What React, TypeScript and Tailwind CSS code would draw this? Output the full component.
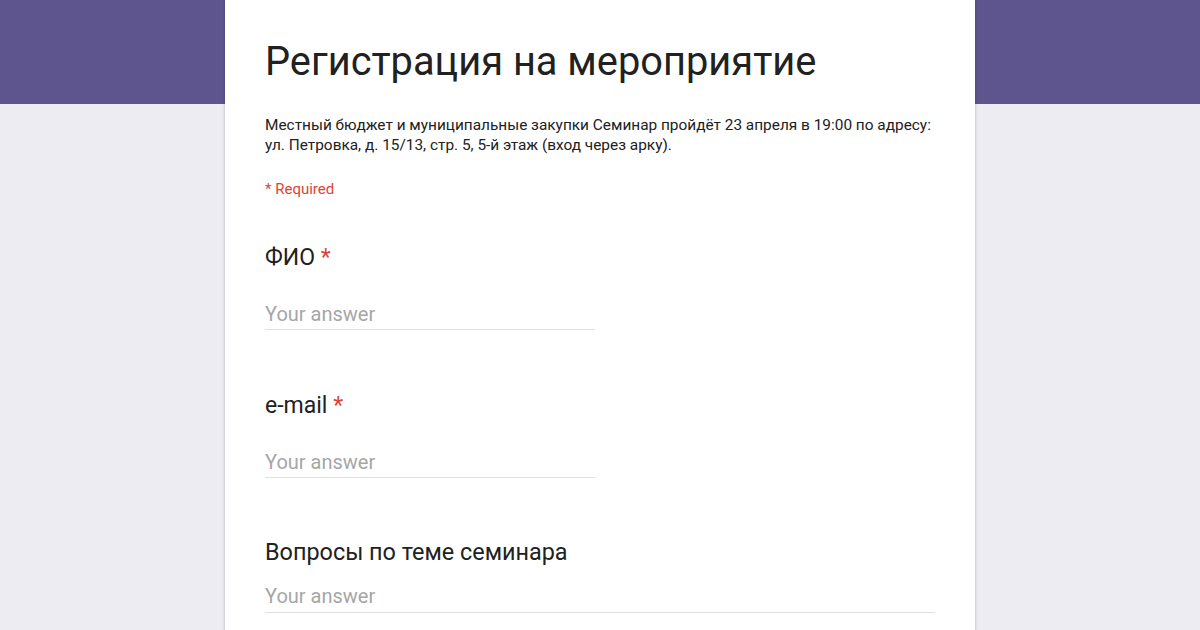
export default function App() {
  return (
    <main
      className="relative w-[1200px] h-[630px] overflow-hidden bg-[#edecf2]"
      style={{ fontFamily: "Roboto, 'Liberation Sans', sans-serif" }}
    >
      {/* HEADER BAND */}
      <div className="h-[104px] bg-[#5e558e]" />

      {/* CARD */}
      <section className="absolute top-0 left-[225px] w-[750px] h-[700px] bg-white shadow-[0_0_3px_rgba(0,0,0,0.25)] px-10">
        <h1 className="pt-[38px] text-[39.8px] leading-[48px] text-[#212121]">
          Регистрация на мероприятие
        </h1>

        <p className="mt-[29px] text-[15.4px] leading-[20px] text-[#212121]">
          Местный бюджет и муниципальные закупки Семинар пройдёт 23 апреля в 19:00 по адресу:
          <br />
          ул. Петровка, д. 15/13, стр. 5, 5-й этаж (вход через арку).
        </p>

        <div className="mt-[24px] text-[15px] leading-[20px] text-[#db4437]">
          * Required
        </div>

        {/* ФИО */}
        <div className="mt-[45px]">
          <div className="text-[23px] leading-[28px] text-[#212121]">
            ФИО <span className="text-[#db4437]">*</span>
          </div>
          <div className="mt-[30px] w-[330px] border-b border-[#e0e0e0] pb-[3px] text-[20px] leading-[24px] text-[#a6a6a6]">
            Your answer
          </div>
        </div>

        {/* EMAIL */}
        <div className="mt-[62px]">
          <div className="text-[23px] leading-[28px] text-[#212121]">
            e-mail <span className="text-[#db4437]">*</span>
          </div>
          <div className="mt-[30px] w-[330px] border-b border-[#e0e0e0] pb-[3px] text-[20px] leading-[24px] text-[#a6a6a6]">
            Your answer
          </div>
        </div>

        {/* ВОПРОСЫ */}
        <div className="mt-[60px]">
          <div className="text-[23.4px] leading-[28px] text-[#212121]">
            Вопросы по теме семинара
          </div>
          <div className="mt-[18px] w-full border-b border-[#e0e0e0] pb-[4px] text-[20px] leading-[24px] text-[#a6a6a6]">
            Your answer
          </div>
        </div>
      </section>
    </main>
  );
}
